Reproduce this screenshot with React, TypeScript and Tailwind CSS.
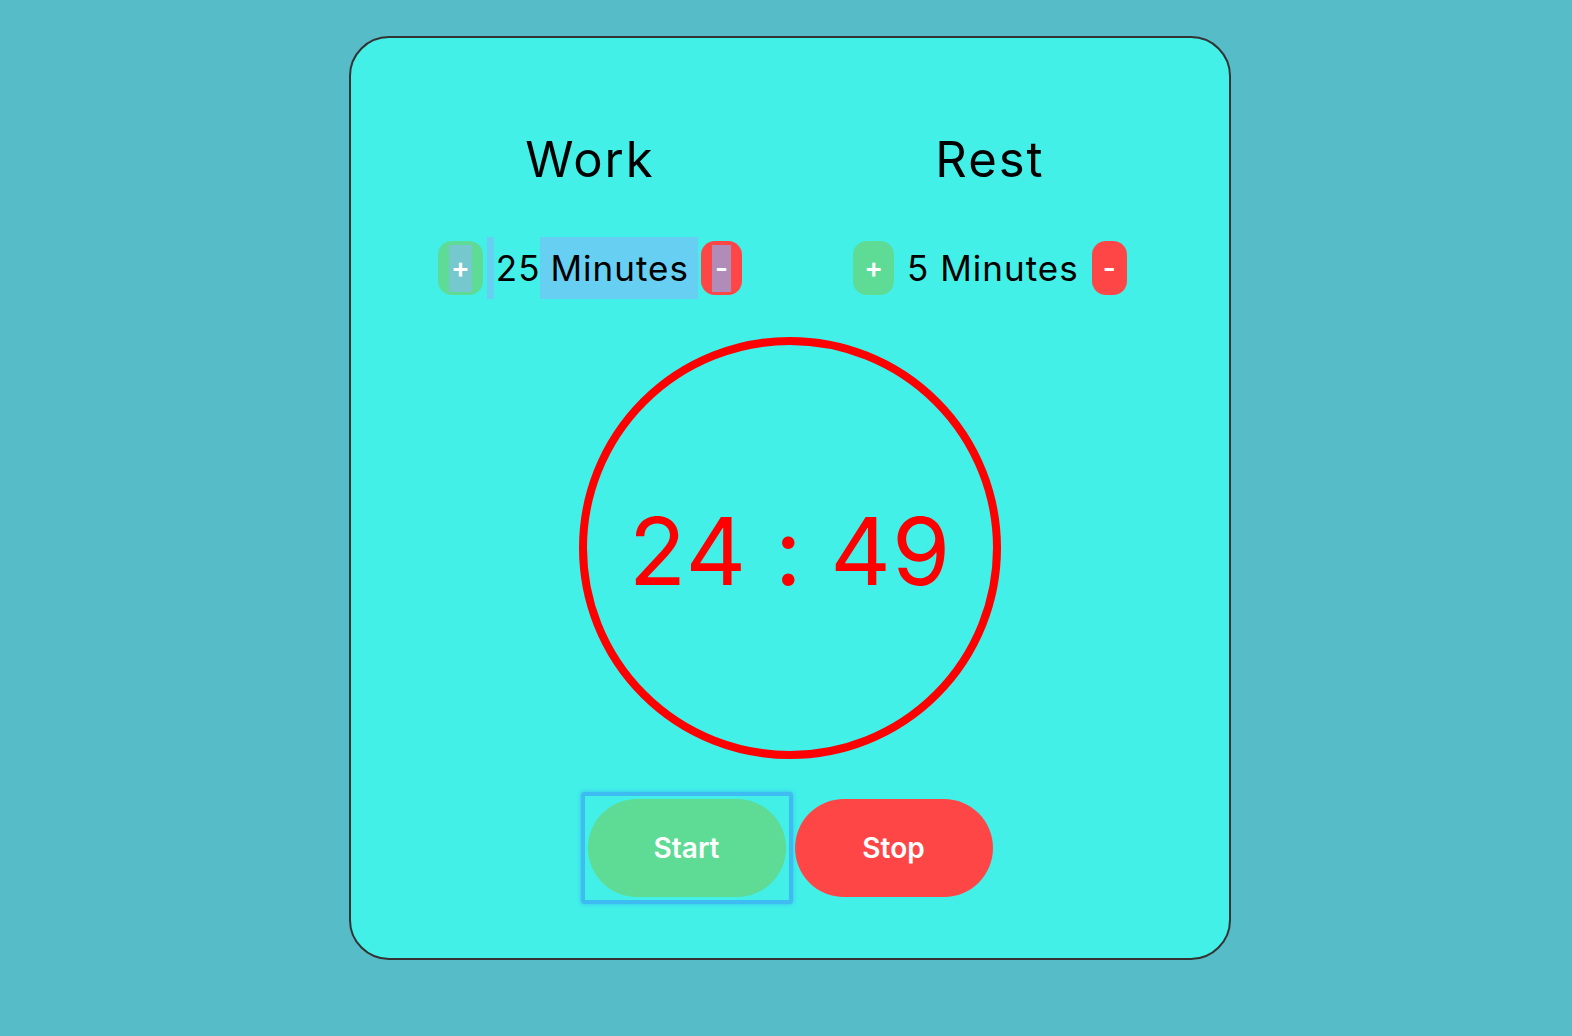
import React from 'react'

const font = { fontFamily: 'Inter, "Noto Sans", sans-serif' }

function Adjuster({ label, value, selected }: { label: string; value: number; selected?: boolean }) {
  return (
    <div className="flex flex-col items-center">
      <h2 className="text-[49px] leading-none font-normal text-black tracking-[2px]">{label}</h2>
      <div className="mt-[53px] flex items-center h-[62px]">
        <button className="h-[54px] px-[11px] rounded-[14px] bg-[#5edb95] text-white text-[28px] font-semibold leading-none flex items-center">
          {selected ? <span className="bg-[#76c8cf] h-[47px] flex items-center px-[2px]">+</span> : <span>+</span>}
        </button>
        {selected ? (
          <>
            <span className="ml-[4px] w-[7px] h-[62px] bg-[#66cff2]" />
            <span className="text-[35px] leading-none text-black flex items-center h-[62px] tracking-[1px]">
              <span className="pl-[2px]">{value}</span>
              <span className="bg-[#66cff2] h-[62px] flex items-center pl-[10px] pr-[9px]">Minutes</span>
            </span>
          </>
        ) : (
          <span className="mx-[13px] text-[35px] leading-none text-black tracking-[1px]">{value} Minutes</span>
        )}
        <button className={`h-[54px] ${selected ? 'ml-[3px]' : ''} px-[11px] rounded-[14px] bg-[#ff4646] text-white text-[28px] font-semibold leading-none flex items-center`}>
          {selected ? <span className="bg-[#b08cb8] h-[47px] flex items-center px-[3px]">-</span> : <span>-</span>}
        </button>
      </div>
    </div>
  )
}

export default function App() {
  return (
    <div className="min-h-screen bg-[#56bdc8] flex justify-center pt-[36px] pl-[8px]" style={font}>
      <div className="w-[882px] h-[924px] border-2 border-[#333333] rounded-[40px] bg-[#42f0e8] flex flex-col items-center pt-[97px]">
        <div className="grid grid-cols-2 w-[800px]">
          <Adjuster label="Work" value={25} selected />
          <Adjuster label="Rest" value={5} />
        </div>
        <div className="mt-[38px] w-[422px] h-[422px] rounded-full border-[8px] border-[#ff0000] flex items-center justify-center">
          <span className="text-[94px] leading-none text-[#ff0000] font-normal pt-[6px] tracking-[1px]">24 : 49</span>
        </div>
        <div className="mt-[40px] flex gap-[9px]">
          <button className="relative w-[198px] h-[98px] rounded-full bg-[#5edb95] text-white text-[28px] font-semibold">
            <span className="absolute -inset-[7px] border-[4px] border-[#3ebcf2] rounded-[3px] shadow-[0_0_4px_#3ebcf2]" />
            Start
          </button>
          <button className="w-[198px] h-[98px] rounded-full bg-[#ff4646] text-white text-[28px] font-semibold">
            Stop
          </button>
        </div>
      </div>
    </div>
  )
}
